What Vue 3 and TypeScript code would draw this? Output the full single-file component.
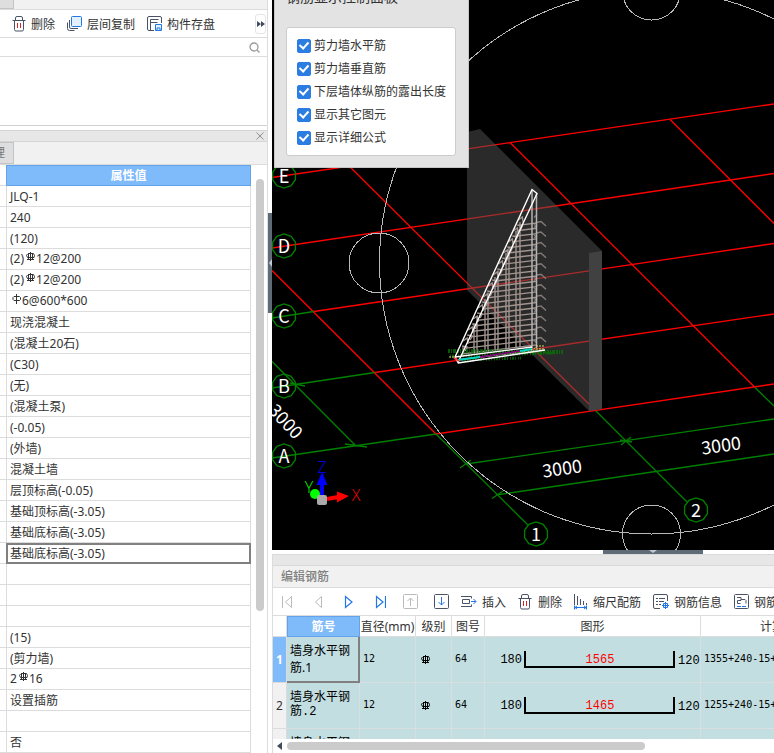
<script setup lang="ts">
import { ref } from 'vue'

interface Prop { before?: string; grade?: number; text: string }

const props: Prop[] = [
  { text: 'JLQ-1' },
  { text: '240' },
  { text: '(120)' },
  { before: '(2)', grade: 3, text: '12@200' },
  { before: '(2)', grade: 3, text: '12@200' },
  { before: '', grade: 1, text: '6@600*600' },
  { text: '现浇混凝土' },
  { text: '(混凝土20石)' },
  { text: '(C30)' },
  { text: '(无)' },
  { text: '(混凝土泵)' },
  { text: '(-0.05)' },
  { text: '(外墙)' },
  { text: '混凝土墙' },
  { text: '层顶标高(-0.05)' },
  { text: '基础顶标高(-3.05)' },
  { text: '基础底标高(-3.05)' },
  { text: '基础底标高(-3.05)' },
  { text: '' },
  { text: '' },
  { text: '' },
  { text: '(15)' },
  { text: '(剪力墙)' },
  { before: '2', grade: 3, text: '16' },
  { text: '设置插筋' },
  { text: '' },
  { text: '否' },
]
const selectedProp = ref(17)

const options = ref([
  { label: '剪力墙水平筋', on: true },
  { label: '剪力墙垂直筋', on: true },
  { label: '下层墙体纵筋的露出长度', on: true },
  { label: '显示其它图元', on: true },
  { label: '显示详细公式', on: true },
])

const bars = [
  { name: '墙身水平钢筋.1', len: '1565', formula: '1355+240-15+15*d' },
  { name: '墙身水平钢筋.2', len: '1465', formula: '1255+240-15+15*d' },
  { name: '墙身水平钢筋.3', len: '1365', formula: '1155+240-15+15*d' },
]
const selectedBar = ref(0)

const axes = [
  { t: 'E', x: 284, y: 176 },
  { t: 'D', x: 284, y: 246 },
  { t: 'C', x: 284, y: 316 },
  { t: 'B', x: 284, y: 386 },
  { t: 'A', x: 284, y: 456 },
  { t: '1', x: 536, y: 534 },
  { t: '2', x: 696, y: 510 },
]

function decagon(cx: number, cy: number, r: number): string {
  return Array.from({ length: 10 }, (_, i) => {
    const a = (i * Math.PI) / 5 + Math.PI / 2
    return `${(cx + r * Math.cos(a)).toFixed(1)},${(cy + r * Math.sin(a)).toFixed(1)}`
  }).join(' ')
}

// Sloping edge of the wall cage: x of the outer chord at height y
const edge = (y: number) => 532 - (y - 190) * 0.456

const stirrups: string[] = []
for (let y = 223; y < 352; y += 5.3) {
  const x = edge(y + 6) + 5
  stirrups.push(`M${x.toFixed(1)} ${(y + (537 - x) * 0.12).toFixed(1)}L537 ${y.toFixed(1)}`)
}
const hooks: string[] = []
for (let i = 0; i < 12; i++) {
  const y = 222.5 + i * 10.55
  hooks.push(`M536 ${y}l5 -1l5 4.5M534 ${y - 5}l3 -3M534 ${y + 2}l3 2`)
}
const uprights: string[] = []
for (const x of [463, 474, 477, 485, 488, 495, 498, 506, 509, 516, 520]) {
  const top = 190 + (532 - x) / 0.456 + 6
  uprights.push(`M${x} ${top.toFixed(1)}V${(355 - (x - 463) * 0.13).toFixed(1)}`)
}
const ties: string[] = []
for (let y = 220; y < 350; y += 11) {
  const x = edge(y)
  ties.push(`M${x.toFixed(1)} ${y}l4 -3l1 6M${(x - 1).toFixed(1)} ${y + 5}l5 1l-2 4`)
}
</script>

<template>
  <div class="app">
    <aside class="left">
      <div class="strip top"><span class="tab">理</span></div>
      <div class="tools">
        <button class="tool">
          <svg width="14" height="16" viewBox="0 0 14 16" fill="none" stroke="#4a5366"><path d="M0.5 4.5h13M3.5 4V2q0-1.500 1.500-1.500h4q1.500 0 1.500 1.500V4M2.500 4.500v9q0 1.500 1.500 1.500h6q1.500 0 1.500-1.500v-9" /><path d="M5.500 7v5M8.500 7v5" stroke="#e02020" /></svg>
          <span>删除</span>
        </button>
        <button class="tool">
          <svg width="15" height="16" viewBox="0 0 15 16" fill="none" stroke="#4a5366"><rect x="4.500" y="0.500" width="10" height="10" rx="1" fill="#e3f0fe" stroke="#2277e3" /><path d="M2.500 4v7q0 1.500 1.500 1.500h7M0.500 6.500v6q0 2 2 2h5" /></svg>
          <span>层间复制</span>
        </button>
        <button class="tool">
          <svg width="15" height="16" viewBox="0 0 15 16" fill="none" stroke="#4a5366"><path d="M7 14.500H2q-1.500 0-1.500-1.500V2q0-1.500 1.500-1.500h11q1.500 0 1.500 1.500v5M3.500 14V3.500h8M3.500 6.500h7" /><path d="M8.500 8.500h6v6h-6z" stroke="#2277e3" fill="#e3f0fe" /><path d="M10 14v-2h3v2" stroke="#2277e3" /></svg>
          <span>构件存盘</span>
        </button>
        <button class="more" aria-label="更多"><svg width="8" height="6" viewBox="0 0 8 6" fill="#434b5c"><path d="M0 0l4 3l-4 3zM4 0l4 3l-4 3z" /></svg></button>
      </div>
      <label class="search">
        <input type="text" aria-label="搜索">
        <svg width="11" height="11" viewBox="0 0 11 11" fill="none" stroke="#999" stroke-width="1.300"><circle cx="5" cy="5" r="4" /><path d="M8 8l2.500 2.500" /></svg>
      </label>
      <div class="list"></div>
      <div class="caption"><button aria-label="关闭"><svg width="8" height="8" viewBox="0 0 8 8" stroke="#909090"><path d="M0.500 0.500l7 7M7.500 0.500l-7 7" /></svg></button></div>
      <div class="strip second"><span class="tab">理</span></div>
      <div class="props">
        <table>
          <colgroup><col class="stub"><col></colgroup>
          <thead><tr><td></td><th>属性值</th></tr></thead>
          <tbody>
            <tr v-for="(p, i) in props" :key="i" @click="selectedProp = i">
              <td></td>
              <td :class="{ picked: i === selectedProp, rebar: p.grade }">{{ p.before }}<svg v-if="p.grade" class="grade" width="9" height="10" viewBox="0 0 9 10" fill="none" stroke="#333"><path v-if="p.grade === 3" d="M4.500 0v9M2 1.500h5.500M1.500 2L0.500 3.500L1.500 5.500h6.500L8.500 3.500L7.500 1.500M2.500 1.500v6M6.500 1.500v6M1 7.500h7" /><path v-else d="M4.500 0v10M2 2.500h5.500l1 1v2l-1 1H2l-1-1v-2z" /></svg>{{ p.text }}</td>
            </tr>
          </tbody>
        </table>
        <div class="vbar"><i></i></div>
      </div>
    </aside>

    <div class="split"><button aria-label="折叠"><svg width="3" height="8" viewBox="0 0 3 8" fill="#c3c9d0"><path d="M3 0v8L0 4z" /></svg></button></div>

    <main class="right">
      <section class="view">
        <svg class="scene" viewBox="272 0 502 550" preserveAspectRatio="xMidYMid slice" fill="none">
          <g stroke="#f00" stroke-width="1.300">
            <path d="M272 177.500L774 104M272 248L774 173.500M314 311.500L774 243.500M375 372.500L774 314M436 434L774 384" />
            <path d="M340 157L596 411M272 270.500L436 434M510 142.500L755 387.500M670 119.500L774 223.500" />
          </g>
          <g stroke="#008000" stroke-width="1.300">
            <path d="M272 318L314 311.500M272 388L375 372.500M272 458L436 434" />
            <path d="M436 434L528 525M596 411L687 502M755 387.500L774 406M466 464L774 419M496 495L774 454" />
            <path d="M272 361.500L355 445M290 383l15 3M345 444l22 3M460 468l11-8M492 498.500l11-7.500M621 445l10-8M620 440l12 2" />
            <polygon v-for="a in axes" :key="a.t" :points="decagon(a.x, a.y, 12)" />
          </g>
          <polygon points="467,132 480,129 602,251 602,409 589,411 467,290" fill="#545454" fill-opacity="0.5" />
          <polygon points="589,253 602,251 602,409 589,411" fill="#414141" />
          <g stroke="#a2948f" stroke-width="1.400">
            <path v-for="(d, i) in stirrups" :key="'s' + i" :d="d" />
            <path v-for="(d, i) in uprights" :key="'u' + i" :d="d" />
            <path v-for="(d, i) in ties" :key="'t' + i" :d="d" />
            <path v-for="(d, i) in hooks" :key="'h' + i" :d="d" stroke="#847b78" />
          </g>
          <path d="M532 190V348M536.500 194V348" stroke="#b4b4b4" stroke-width="1.500" />
          <path d="M448 351L563 352" stroke="#087008" stroke-width="4" stroke-dasharray="2 1 1 1 3 1" opacity="0.8" />
          <path d="M450 356L556 353M462 360L521 358" stroke="#087008" stroke-width="3" stroke-dasharray="1 1 2 1 1 2" opacity="0.8" />
          <path d="M455 357L532 189.500L537 193.500L458 362.500ZM455 357L532 347M458 363L545 350" stroke="#fff" stroke-width="1.400" />
          <path d="M458 360l22-3" stroke="#00d8c0" stroke-width="2" />
          <path d="M480 357l40-6" stroke="#800080" stroke-width="1.500" />
          <path d="M520 351l12-2" stroke="#00d8c0" stroke-width="2" />
          <path d="M454 358l5 3" stroke="#f33" stroke-width="2" />
          <path d="M531 350l6-3M449 357h6M536 346h8M536 349h8" stroke="#d8d870" stroke-dasharray="2 1" />
          <g stroke="#b8b8b8" shape-rendering="crispEdges">
            <circle cx="651.500" cy="262" r="272" />
            <circle cx="379" cy="263" r="30" />
            <circle cx="651.500" cy="534" r="29" />
            <circle cx="651.500" cy="-9" r="29" />
          </g>
          <g class="mark" fill="#fff" text-anchor="middle">
            <text v-for="a in axes" :key="a.t" :x="a.x" :y="a.y + 7">{{ a.t }}</text>
            <text x="0" y="7" transform="translate(562 468) rotate(-8)">3000</text>
            <text x="0" y="7" transform="translate(721 445) rotate(-8)">3000</text>
            <text x="0" y="7" transform="translate(286 421) rotate(47)">3000</text>
          </g>
          <circle cx="315" cy="494" r="5" fill="#0f0" />
          <path d="M327 499l11-2" stroke="#f00" stroke-width="4" />
          <path d="M337 491.500v11l12-6.500z" fill="#f00" />
          <path d="M322 497V482" stroke="#00f" stroke-width="4" />
          <path d="M316.500 485L322 472l5.500 13z" fill="#00f" />
          <rect x="317" y="495" width="10" height="10" rx="2" fill="#aaa" />
          <g class="triad" text-anchor="middle">
            <text x="322" y="473" fill="#00f">Z</text>
            <text x="309" y="493" fill="#0f0">Y</text>
            <text x="356" y="501" fill="#f00">X</text>
          </g>
        </svg>
        <div class="panel">
          <h2>钢筋显示控制面板</h2>
          <div class="box">
            <label v-for="o in options" :key="o.label"><input v-model="o.on" type="checkbox"><span>{{ o.label }}</span></label>
          </div>
        </div>
      </section>

      <div class="hsplit"><button aria-label="折叠编辑区"><svg width="8" height="3" viewBox="0 0 8 3" fill="#c3c9d0"><path d="M0 0h8L4 3z" /></svg></button></div>

      <section class="editor">
        <div class="bar"></div>
        <h3>编辑钢筋</h3>
        <div class="edit-tools">
          <div class="nav">
            <button aria-label="首行"><svg width="12" height="14" viewBox="0 0 12 14" fill="none" stroke="#bbb"><path d="M0.500 1v12M9.500 1.500v11L3.500 7z" /></svg></button>
            <button aria-label="上一行"><svg width="12" height="14" viewBox="0 0 12 14" fill="none" stroke="#bbb"><path d="M9.500 1.500v11L3.500 7z" /></svg></button>
            <button aria-label="下一行"><svg width="12" height="14" viewBox="0 0 12 14" fill="none" stroke="#2277e3" stroke-width="1.200"><path d="M2.500 1.500v11L9 7z" /></svg></button>
            <button aria-label="末行"><svg width="12" height="14" viewBox="0 0 12 14" fill="none" stroke="#2277e3" stroke-width="1.200"><path d="M2.500 1.500v11L9 7zM11.500 1v12" /></svg></button>
            <button aria-label="上移"><svg width="15" height="16" viewBox="0 0 15 16" fill="none" stroke="#bbb"><rect x="0.500" y="0.500" width="14" height="14" rx="1" /><path d="M7.500 12V4M4.500 7l3-3l3 3" /></svg></button>
            <button aria-label="下移"><svg width="15" height="16" viewBox="0 0 15 16" fill="none" stroke="#4a5366"><rect x="0.500" y="0.500" width="14" height="14" rx="1" /><path d="M7.500 3v8M4.500 8l3 3l3-3" stroke="#2277e3" /></svg></button>
          </div>
          <button class="tool">
            <svg width="16" height="14" viewBox="0 0 16 14" fill="none" stroke="#4a5366"><path d="M0 1.500h10.500v2M0 11.500h10.500v-2M1.500 4.500h7v4h-7z" /><path d="M10 6.500h5M12.500 4l2.500 2.500L12.500 9" stroke="#2277e3" /></svg>
            <span>插入</span>
          </button>
          <button class="tool">
            <svg width="15" height="16" viewBox="0 0 15 16" fill="none" stroke="#4a5366"><path d="M0.500 4.500h13M3.500 4V2q0-1.500 1.500-1.500h4q1.500 0 1.500 1.500V4M2.500 4.500v9q0 1.500 1.500 1.500h6q1.500 0 1.500-1.500v-9" /><path d="M5.500 7v5M8.500 7v5" stroke="#e02020" /></svg>
            <span>删除</span>
          </button>
          <button class="tool">
            <svg width="14" height="16" viewBox="0 0 14 16" fill="none" stroke="#4a5366"><path d="M0.500 0v11M3.500 2v9M6.500 5v6M9.500 7v4M12.500 9v2" /><path d="M0 13.500h13M0.500 11.500v4M12.500 11.500v4M3 12l-2 1.500L3 15M10 12l2 1.500L10 15" stroke="#2277e3" /></svg>
            <span>缩尺配筋</span>
          </button>
          <button class="tool">
            <svg width="16" height="16" viewBox="0 0 16 16" fill="none" stroke="#4a5366"><path d="M7 14.500H2q-1.500 0-1.500-1.500V2q0-1.500 1.500-1.500h11q1.500 0 1.500 1.500v5M3 4.500h2M6 4.500h6M3 7.500h2M6 7.500h5M3 10.500h2M6 10.500h2" /><path d="M12.500 8v7M9 11.500h7M10.500 9.500h4v4h-4z" stroke="#2277e3" /></svg>
            <span>钢筋信息</span>
          </button>
          <button class="tool">
            <svg width="15" height="16" viewBox="0 0 15 16" fill="none" stroke="#4a5366"><rect x="0.500" y="0.500" width="14" height="14" rx="1" /><path d="M3 3.500h4v3H3.500v3h3M7 5.500h4l1 1v3" /><path d="M3 12.500h4M8 12.500h4" stroke="#2277e3" /></svg>
            <span>钢筋图库</span>
          </button>
        </div>
        <div class="grid">
          <table>
            <colgroup><col class="c0"><col class="c1"><col class="c2"><col class="c3"><col class="c4"><col class="c5"><col class="c6"></colgroup>
            <thead>
              <tr><th></th><th class="on">筋号</th><th>直径(mm)</th><th>级别</th><th>图号</th><th>图形</th><th>计算公式</th></tr>
            </thead>
            <tbody>
              <tr v-for="(b, i) in bars" :key="b.name" :class="{ current: i === selectedBar }" @click="selectedBar = i">
                <th>{{ i + 1 }}</th>
                <td class="name">{{ b.name }}</td>
                <td class="num">12</td>
                <td class="level"><svg width="9" height="10" viewBox="0 0 9 10" fill="none" stroke="#000"><path d="M4.500 0v9M2 1.500h5.500M1.500 2L0.500 3.500L1.500 5.500h6.500L8.500 3.500L7.500 1.500M2.500 1.500v6M6.500 1.500v6M1 7.500h7" /></svg></td>
                <td class="num">64</td>
                <td class="shape">
                  <svg width="215" height="45" viewBox="0 0 215 45">
                    <path d="M40 14v16h149V14" fill="none" stroke="#000" stroke-width="2" />
                    <text x="37" y="26" text-anchor="end">180</text>
                    <text x="115" y="26" text-anchor="middle" fill="#f00">{{ b.len }}</text>
                    <text x="193" y="27">120</text>
                  </svg>
                </td>
                <td class="num">{{ b.formula }}</td>
              </tr>
            </tbody>
          </table>
        </div>
        <div class="hbar"><svg width="5" height="8" viewBox="0 0 5 8" fill="#434b5c"><path d="M5 0v8L0 4z" /></svg><i></i></div>
      </section>
    </main>
  </div>
</template>

<style>
body { margin: 0; }
</style>

<style scoped>
.app {
  display: flex;
  height: 100vh;
  overflow: hidden;
  background: #fff;
  color: #333;
  font: 12px/20px "Noto Sans", "Noto Sans CJK SC", sans-serif;
}
.app * { box-sizing: border-box; }
svg { display: block; flex: none; }
button {
  display: flex;
  align-items: center;
  justify-content: center;
  flex: none;
  padding: 0;
  border: 0;
  background: none;
  color: inherit;
  font: inherit;
  white-space: nowrap;
}
table { border-collapse: separate; border-spacing: 0; table-layout: fixed; }
th, td { padding: 0; overflow: hidden; }

.left {
  display: flex;
  flex-direction: column;
  flex: none;
  width: 268px;
  border-right: 1px solid #dcdcdc;
}
.strip { display: flex; flex: none; overflow: hidden; background: #f1f1f1; border-bottom: 1px solid #dcdcdc; }
.strip.top { height: 10px; align-items: flex-end; }
.strip.second { height: 23px; }
.tab {
  width: 14px;
  height: 22px;
  border: 1px solid #c4c4c4;
  border-left: 0;
  background: #dedede;
  color: #777;
  text-indent: -7px;
}
.top .tab { line-height: 12px; }
.tools { display: flex; flex: none; align-items: center; height: 28px; padding-left: 12px; gap: 12px; border-bottom: 1px solid #dcdcdc; }
.tool { gap: 5px; }
.tool span { padding-top: 2px; }
.more { width: 11px; height: 20px; margin: 0 1px 0 auto; border: 1px solid #e4e4e4; border-radius: 3px; }
.search { display: flex; flex: none; align-items: center; height: 19px; padding-right: 7px; border-bottom: 1px solid #dcdcdc; }
.search input { flex: 1; min-width: 0; height: 16px; border: 0; outline: 0; background: none; font: inherit; }
.list { flex: none; height: 69px; border-bottom: 1px solid #d0d0d0; margin-bottom: 4px; }
.caption {
  display: flex;
  flex: none;
  align-items: center;
  justify-content: flex-end;
  height: 12px;
  padding-right: 3px;
  border: solid #d4d4d4;
  border-width: 1px 0;
  background: #e7e7e7;
}
.props { display: flex; flex: 1; min-height: 0; overflow: hidden; }
.props table { flex: 1; height: 0; }
.stub { width: 6px; }
.props th { height: 21px; border: 1px solid #63a3ea; background: #7fbafb; color: #fff; font-weight: 700; line-height: 19px; }
.props td { height: 21px; border-bottom: 1px solid #dcdcdc; line-height: 18px; white-space: nowrap; }
.props tbody td + td { border-left: 1px solid #dcdcdc; border-right: 1px solid #dcdcdc; padding: 2px 0 0 3px; }
.props tbody td.rebar { padding: 0 0 0 3px; }
.props tbody td.picked { outline: 2px solid #808080; outline-offset: -2px; }
.grade { display: inline-block; margin: 0 1px 0 2px; vertical-align: 1px; }
.vbar { flex: none; width: 16px; padding: 14px 3px 0 5px; }
.vbar i { display: block; height: 432px; border-radius: 4px; background: #cbcbcb; }

.split { display: flex; flex: none; align-items: center; width: 4px; padding-bottom: 227px; }
.split button { width: 4px; height: 100px; justify-content: flex-end; background: #606b78; }

.right { display: flex; flex: 1; flex-direction: column; min-width: 0; }
.view { position: relative; flex: 1; min-height: 0; overflow: hidden; background: #000; }
.scene { width: 100%; height: 100%; }
.mark { font-family: "Noto Sans CJK SC", sans-serif; font-size: 18px; }
.triad { font-family: "Open Sans", sans-serif; font-size: 16px; font-weight: 300; }
.panel {
  position: absolute;
  top: -20px;
  left: 2px;
  padding: 0 12px 11px 11px;
  border: 1px solid #c6c6c6;
  background: #e3e3e3;
}
.panel h2 { margin: 0 0 14px; font-size: 14px; font-weight: 400; line-height: 32px; }
.box { padding: 6px 9px 6px 10px; border: 1px solid #ccc; border-radius: 3px; background: #fff; }
.box label { display: flex; align-items: center; gap: 3px; height: 23px; }
.box input {
  display: grid;
  place-items: center;
  width: 14px;
  height: 14px;
  margin: 0;
  appearance: none;
  border: 1px solid #2b7de1;
  border-radius: 2px;
}
.box input:checked { background: #2b7de1; }
.box input:checked::after {
  content: "";
  width: 4px;
  height: 7px;
  margin-bottom: 2px;
  border: solid #fff;
  border-width: 0 2px 2px 0;
  transform: rotate(42deg);
}

.hsplit { display: flex; flex: none; justify-content: center; height: 4px; padding-left: 259px; }
.hsplit button { width: 100px; height: 4px; align-items: flex-start; background: #606b78; }

.editor { display: flex; flex: none; flex-direction: column; height: 199px; border-left: 1px solid #dcdcdc; }
.bar { flex: none; height: 12px; border: solid #d9d9d9; border-width: 1px 0; background: #e7e7e7; }
.editor h3 { flex: none; height: 22px; margin: 0; padding-left: 8px; border-bottom: 1px solid #dcdcdc; background: #f1f1f1; color: #808080; font-size: 12px; font-weight: 500; line-height: 22px; }
.edit-tools { display: flex; flex: none; align-items: center; gap: 12px; height: 28px; padding-left: 7px; border-bottom: 1px solid #dcdcdc; overflow: hidden; }
.nav { display: flex; flex: none; align-items: center; justify-content: space-between; width: 169px; }
.nav button { width: 15px; }
.grid { flex: 1; min-height: 0; overflow: hidden; }
.grid table { width: 595px; }
.c0 { width: 14px; }
.c1 { width: 73px; }
.c2 { width: 56px; }
.c3 { width: 36px; }
.c4 { width: 33px; }
.c5 { width: 216px; }
.grid th { height: 21px; border: solid #dcdcdc; border-width: 0 1px 1px 0; font-weight: 400; line-height: 18px; white-space: nowrap; }
.grid thead th { padding-top: 2px; }
.grid thead th.on { padding-top: 1px; border: 1px solid #63a3ea; background: #7fbafb; color: #fff; font-weight: 700; }
.grid tbody th { background: #f1f1f1; }
.grid .current th { background: #7fbafb; color: #fff; font-weight: 700; }
.grid td { height: 46px; border: solid #d9dfe0; border-width: 0 1px 1px 0; background: #c2dee0; color: #000; }
.grid .name { padding: 0 3px 2px; font-family: "Liberation Mono", "Noto Sans CJK SC", monospace; line-height: 14px; }
.grid .current .name { font-family: inherit; line-height: 17px; box-shadow: inset -1px -1px #808080; border-color: #808080; }
.grid .num { padding: 0 3px 2px; font-family: "DejaVu Sans Mono", monospace; font-size: 10px; white-space: nowrap; }
.grid .level { padding-left: 5px; }
.shape text { font-family: "Liberation Mono", monospace; font-size: 12px; }
.hbar { display: flex; flex: none; align-items: center; height: 14px; padding-left: 4px; gap: 5px; }
.hbar i { width: 358px; height: 8px; border-radius: 4px; background: #cbcbcb; }
</style>
